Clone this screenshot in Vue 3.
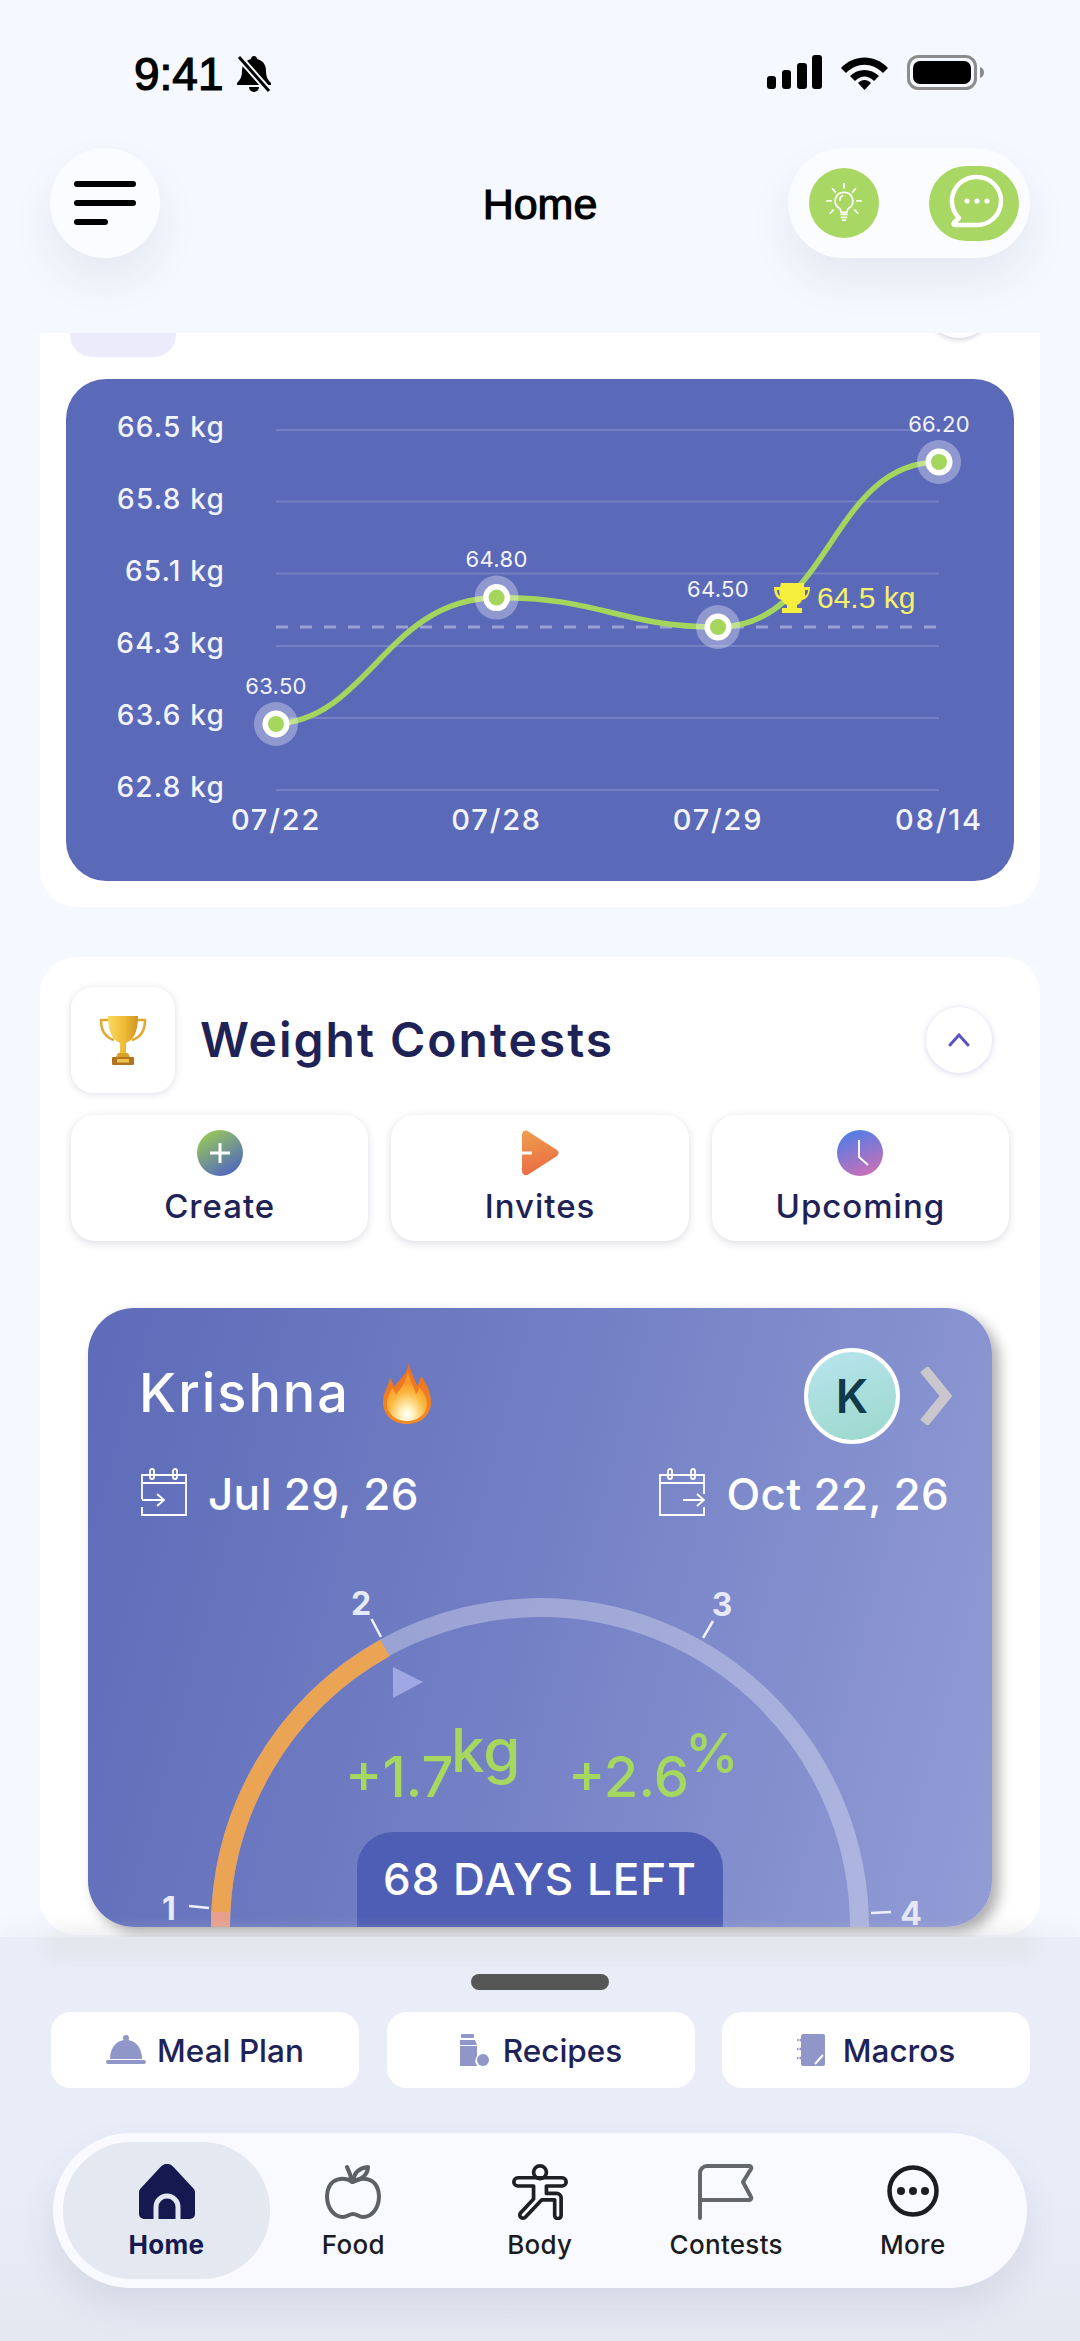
<script setup>
const gridY = [430, 501.5, 573.5, 646, 718, 790]
const yLabels = [
  { t: '66.5 kg', y: 437 }, { t: '65.8 kg', y: 509 }, { t: '65.1 kg', y: 581 },
  { t: '64.3 kg', y: 653 }, { t: '63.6 kg', y: 725 }, { t: '62.8 kg', y: 797 }
]
const points = [
  { x: 276, y: 724, v: '63.50', ly: 694, d: '07/22' },
  { x: 496.6, y: 597.6, v: '64.80', ly: 567, d: '07/28' },
  { x: 718, y: 627, v: '64.50', ly: 597, d: '07/29' },
  { x: 939, y: 462, v: '66.20', ly: 432, d: '08/14' }
]
const actions = ['Create', 'Invites', 'Upcoming']
</script>

<template>
  <div class="page">
    <header class="head">
      <div class="status">
        <div class="status-left">
          <span class="time">9:41</span>
          <svg class="bell" width="36" height="38" viewBox="0 0 36 38">
            <path d="M18 1c2 0 3 1.500 3 3 6 1.500 9 6 9 12 0 6 2 9 5 12v2H1v-2c3-3 5-6 5-12 0-6 3-10.500 9-12 0-1.500 1-3 3-3z" fill="#000"/>
            <path d="M13 32h10a5 5 0 0 1-10 0z" fill="#000"/>
            <path d="M3 2 L33 36" stroke="#f5f8fe" stroke-width="7"/>
            <path d="M3 2 L33 36" stroke="#000" stroke-width="3"/>
          </svg>
        </div>
        <div class="status-right">
          <svg width="55" height="35" viewBox="0 0 55 35">
            <rect x="0" y="21" width="9" height="13" rx="3" fill="#000"/>
            <rect x="15" y="15" width="9" height="19" rx="3" fill="#000"/>
            <rect x="30" y="8" width="10" height="26" rx="3" fill="#000"/>
            <rect x="45" y="0" width="10" height="34" rx="3" fill="#000"/>
          </svg>
          <svg width="47" height="35" viewBox="0 0 47 35">
            <path d="M0 13 C13 -1 34 -1 47 13 L42 18 C31 7 16 7 5 18 Z" fill="#000"/>
            <path d="M9 21 C17 13 30 13 38 21 L33 26 C27 20 20 20 14 26 Z" fill="#000"/>
            <path d="M17 28 C21 24 26 24 30 28 L23.500 35 Z" fill="#000"/>
          </svg>
          <svg width="78" height="35" viewBox="0 0 78 35">
            <rect x="1.500" y="1.500" width="67" height="32" rx="10" fill="none" stroke="#8c8c8c" stroke-width="3"/>
            <rect x="6" y="6" width="58" height="23" rx="7" fill="#000"/>
            <path d="M73 12c3 1 4 3 4 5.500s-1 4.500-4 5.500z" fill="#8c8c8c"/>
          </svg>
        </div>
      </div>
      <div class="topbar">
        <button class="menu-btn">
          <span class="bar"></span>
          <span class="bar"></span>
          <span class="bar short"></span>
        </button>
        <h1 class="title">Home</h1>
        <div class="actions-pill">
          <span class="bulb">
            <svg width="36" height="40" viewBox="0 0 50 56" fill="none" stroke="#fff" stroke-width="2.400" stroke-linecap="round">
              <path d="M25 13a12 12 0 0 0-7 22c2 1.500 3 3.500 3 6h8c0-2.500 1-4.500 3-6a12 12 0 0 0-7-22z"/>
              <path d="M21 44h8M21.500 48h7M23 52h4"/>
              <path d="M25 1v6M9 8l4 5M41 8l-4 5M1 25h6M43 25h6M6 42l4-4M44 42l-4-4"/>
              <path d="M19 24c0-3 2-5 4-6"/>
            </svg>
          </span>
          <span class="chat">
            <svg width="60" height="58" viewBox="0 0 60 58" fill="none" stroke="#fff" stroke-width="4.500" stroke-linejoin="round">
              <path d="M33 3a24 24 0 1 1 0 48H11c-1.500 0-2-1.500-1-2.500l5-4.500a24 24 0 0 1 18-41z"/>
              <circle cx="23" cy="27" r="2.600" fill="#fff" stroke="none"/>
              <circle cx="33" cy="27" r="2.600" fill="#fff" stroke="none"/>
              <circle cx="43" cy="27" r="2.600" fill="#fff" stroke="none"/>
            </svg>
          </span>
        </div>
      </div>
    </header>

    <main class="scroller">
      <section class="card weight-card">
        <div class="weight-head">
          <span class="weight-tile"></span>
          <span class="weight-toggle"></span>
        </div>
        <div class="chart-panel">
          <svg class="chart" width="948" height="502" viewBox="66 379 948 502">
            <line v-for="y in gridY" :key="y" x1="276" x2="939" :y1="y" :y2="y" class="grid"/>
            <line x1="276" x2="939" y1="627" y2="627" class="goal"/>
            <text v-for="l in yLabels" :key="l.t" x="225" :y="l.y" text-anchor="end" class="ylab">{{ l.t }}</text>
            <path d="M276 724 C370 718 385 600 496.600 597.600 C600 597 620 627 718 627 C830 627 830 462 939 462" class="curve"/>
            <g v-for="p in points" :key="p.d">
              <circle :cx="p.x" :cy="p.y" r="22" class="halo"/>
              <circle :cx="p.x" :cy="p.y" r="13.500" fill="#fff"/>
              <circle :cx="p.x" :cy="p.y" r="8" fill="#a4d65e"/>
              <text :x="p.x" :y="p.ly" text-anchor="middle" class="val">{{ p.v }}</text>
              <text :x="p.x" y="830" text-anchor="middle" class="xlab">{{ p.d }}</text>
            </g>
            <path d="M781 583h23v4h6c0 8-3 12-8 13-1 3-3 4-5 5v3h5v5h-20v-5h5v-3c-2-1-4-2-5-5-5-1-8-5-8-13h6zM779 590h-2c0 3 1 5 3 6zM805 590h3c0 3-1 5-3 6z" fill="#f6ee3c" fill-rule="evenodd"/>
            <text x="817" y="608" class="goal-text">64.5 kg</text>
          </svg>
        </div>
      </section>

      <section class="card contests-card">
        <div class="contests-head">
          <span class="trophy-tile">
            <svg width="48" height="51" viewBox="0 0 48 51">
              <defs>
                <linearGradient id="gold" x1="0" y1="0" x2="1" y2="0">
                  <stop offset="0" stop-color="#f9d95f"/>
                  <stop offset="0.55" stop-color="#eeba35"/>
                  <stop offset="1" stop-color="#cf9322"/>
                </linearGradient>
              </defs>
              <path d="M10 5H2c0 10 3 17 13 20M38 5h8c0 10-3 17-13 20" fill="none" stroke="#dfa92e" stroke-width="2.500"/>
              <path d="M9 1h30c0 15-4 24-12 27v11h-6V28C13 25 9 16 9 1z" fill="url(#gold)"/>
              <path d="M19 38h10l2 4H17z" fill="#dba02a"/>
              <rect x="13" y="42" width="22" height="8" rx="1" fill="#b0741f"/>
              <rect x="18" y="44" width="12" height="3.500" fill="#f1c34d"/>
            </svg>
          </span>
          <h2 class="contests-title">Weight Contests</h2>
          <span class="toggle">
            <svg width="22" height="14" viewBox="0 0 22 14" fill="none" stroke="#5a55c2" stroke-width="3" stroke-linecap="round">
              <path d="M2 12 L11 2 L20 12"/>
            </svg>
          </span>
        </div>

        <div class="action-row">
          <button v-for="(a, i) in actions" :key="a" class="action">
            <svg v-if="i === 0" width="46" height="46" viewBox="0 0 46 46">
              <defs>
                <linearGradient id="ga" x1="0.200" y1="0" x2="0.800" y2="1">
                  <stop offset="0" stop-color="#9acb57"/>
                  <stop offset="1" stop-color="#4d63c4"/>
                </linearGradient>
              </defs>
              <circle cx="23" cy="23" r="23" fill="url(#ga)"/>
              <path d="M23 13v20M13 23h20" stroke="#fff" stroke-width="3"/>
            </svg>
            <svg v-else-if="i === 1" width="40" height="46" viewBox="0 0 40 46">
              <defs>
                <linearGradient id="gb" x1="0.300" y1="0" x2="0.500" y2="1">
                  <stop offset="0" stop-color="#ee9d4c"/>
                  <stop offset="1" stop-color="#ea6a45"/>
                </linearGradient>
              </defs>
              <path d="M2 5c0-4 4-6 7-3l28 18c2 1.500 2 4.500 0 6L9 44c-3 2.500-7 1-7-3z" fill="url(#gb)"/>
              <path d="M2 23h10" stroke="#fff" stroke-width="3"/>
            </svg>
            <svg v-else width="46" height="46" viewBox="0 0 46 46">
              <defs>
                <linearGradient id="gc" x1="0.300" y1="0" x2="0.700" y2="1">
                  <stop offset="0" stop-color="#4f7ee6"/>
                  <stop offset="1" stop-color="#cc6fb6"/>
                </linearGradient>
              </defs>
              <circle cx="23" cy="23" r="23" fill="url(#gc)"/>
              <path d="M22 10v17l9 8" fill="none" stroke="#fff" stroke-width="1.800"/>
            </svg>
            <span class="action-label">{{ a }}</span>
          </button>
        </div>

        <article class="contest">
          <div class="contest-top">
            <div class="contest-name">
              <span class="name">Krishna</span>
              <svg class="flame" width="50" height="62" viewBox="0 0 50 62">
                <defs>
                  <linearGradient id="fl" x1="0" y1="0" x2="0" y2="1">
                    <stop offset="0" stop-color="#ee6f1c"/>
                    <stop offset="1" stop-color="#f08a26"/>
                  </linearGradient>
                  <radialGradient id="fc" cx="0.500" cy="0.880" r="0.650">
                    <stop offset="0" stop-color="#fff"/>
                    <stop offset="0.250" stop-color="#fff1bd"/>
                    <stop offset="0.700" stop-color="#fbb83f"/>
                    <stop offset="1" stop-color="#f79a2c"/>
                  </radialGradient>
                </defs>
                <path d="M27 0c1 10 5 15 8 24 2-3 3-6 4-10 6 8 10 17 10 26 0 13-10 22-24 22S1 53 1 40c0-10 5-14 7-24 2 3 3 5 4 9 6-8 14-14 15-25z" fill="url(#fl)"/>
                <path d="M26 9c1 9 5 13 8 23 2-2 3-4 3-7 5 6 8 11 8 17 0 10-9 17-20 17S5 52 5 42c0-7 3-11 5-16 2 2 3 4 4 7 5-7 11-14 12-24z" fill="url(#fc)"/>
              </svg>
            </div>
            <div class="contest-user">
              <span class="avatar">K</span>
              <svg width="32" height="58" viewBox="0 0 32 58" fill="none" stroke="#c9c6cd" stroke-width="10">
                <path d="M4 2 L26 29 L4 56"/>
              </svg>
            </div>
          </div>
          <div class="contest-dates">
            <div class="date">
              <svg width="46" height="49" viewBox="0 0 46 49" fill="none" stroke="#fff" stroke-width="1.800">
                <path d="M1 32V8h44v40H1v-8"/>
                <path d="M1 16h44"/>
                <rect x="9" y="2" width="4" height="10" rx="2"/>
                <rect x="32" y="2" width="4" height="10" rx="2"/>
                <path d="M1 33h21M16 27l7 6-7 6"/>
              </svg>
              <span>Jul 29, 26</span>
            </div>
            <div class="date">
              <svg width="46" height="49" viewBox="0 0 46 49" fill="none" stroke="#fff" stroke-width="1.800">
                <path d="M45 27V8H1v40h44v-8"/>
                <path d="M1 16h44"/>
                <rect x="9" y="2" width="4" height="10" rx="2"/>
                <rect x="32" y="2" width="4" height="10" rx="2"/>
                <path d="M24 33h21M38 27l7 6-7 6"/>
              </svg>
              <span>Oct 22, 26</span>
            </div>
          </div>
          <svg class="gauge" width="904" height="412" viewBox="88 1515 904 412">
            <path d="M220.500 1927 A319.500 319.500 0 0 1 859.500 1927" class="track"/>
            <path d="M220.500 1927 A319.500 319.500 0 0 1 385 1648" class="progress"/>
            <path d="M220.500 1927 L220.500 1912" class="progress-start"/>
            <path d="M189 1906 L209 1908M371.500 1619 L381 1637M713 1621 L703 1638M871 1913 L891 1912" class="tick"/>
            <text x="169" y="1920" text-anchor="middle" class="tick-num">1</text>
            <text x="361" y="1615" text-anchor="middle" class="tick-num">2</text>
            <text x="722" y="1616" text-anchor="middle" class="tick-num">3</text>
            <text x="911" y="1925" text-anchor="middle" class="tick-num">4</text>
            <path d="M393 1667 L423 1682 L393 1698 Z" fill="#a0a8e3"/>
            <text x="345" y="1797" class="stat">+1.7</text>
            <text x="451" y="1772" class="stat-unit">kg</text>
            <text x="568" y="1797" class="stat">+2.6</text>
            <text x="685" y="1772" class="stat-pct">%</text>
            <path d="M357 1927 V1868 a36 36 0 0 1 36 -36 H687 a36 36 0 0 1 36 36 V1927 Z" fill="#4f5eb5"/>
            <text x="540" y="1895" text-anchor="middle" class="left">68 DAYS LEFT</text>
          </svg>
        </article>
      </section>
    </main>

    <footer class="sheet">
      <div class="handle"></div>
      <div class="links">
        <button class="link">
          <svg width="40" height="30" viewBox="0 0 40 30" fill="#9196c9">
            <circle cx="20" cy="3" r="3"/>
            <path d="M4 24C4 12 11 5 20 5s16 7 16 19z"/>
            <rect x="0" y="25" width="40" height="4" rx="2"/>
          </svg>
          <span>Meal Plan</span>
        </button>
        <button class="link">
          <svg width="30" height="32" viewBox="0 0 30 32" fill="#9196c9">
            <rect x="2" y="0" width="13" height="4" rx="1"/>
            <path d="M1 6h15l2 5H1z"/>
            <path d="M1 12h17v10a8 8 0 0 0 0 9.500V32H1z"/>
            <circle cx="24" cy="26" r="6"/>
          </svg>
          <span>Recipes</span>
        </button>
        <button class="link">
          <svg width="28" height="32" viewBox="0 0 28 32" fill="none">
            <rect x="4" y="0" width="24" height="32" rx="2" fill="#9196c9"/>
            <path d="M1 6h7M1 15h7M1 24h7" stroke="#9196c9" stroke-width="2.500" stroke-linecap="round"/>
            <path d="M2 3v5M2 12v5M2 21v5" stroke="#fff" stroke-width="1"/>
            <path d="M18 30 L26 21" stroke="#fff" stroke-width="2"/>
          </svg>
          <span>Macros</span>
        </button>
      </div>
      <nav class="nav">
        <a class="nav-item active">
          <svg width="56" height="56" viewBox="0 0 56 56">
            <path d="M22 2.500a8 8 0 0 1 12 0L54 24a6 6 0 0 1 2 5v21a5 5 0 0 1-5 5H5a5 5 0 0 1-5-5V29a6 6 0 0 1 2-5z" fill="#15194f"/>
            <path d="M17 55V43a11 11 0 0 1 22 0v12" fill="none" stroke="#e3e7f0" stroke-width="5"/>
          </svg>
          <span>Home</span>
        </a>
        <a class="nav-item">
          <svg width="56" height="56" viewBox="0 0 56 56" fill="none" stroke="#5e6164" stroke-width="4" stroke-linecap="round" stroke-linejoin="round">
            <path d="M28 18C20 13 3 12 2 32c0 12 7 21 16 21 4 0 6-3 10-3s6 3 10 3c9 0 16-9 16-21-1-20-18-19-26-14z"/>
            <path d="M27 18c-1-7-3-11-5-15"/>
            <path d="M28 17c1-8 6-13 15-14 0 7-6 13-15 14z"/>
          </svg>
          <span>Food</span>
        </a>
        <a class="nav-item">
          <svg width="60" height="61" viewBox="0 0 60 61" fill="none" stroke="#1d1f22" stroke-width="4" stroke-linejoin="round">
            <circle cx="30" cy="9" r="7"/>
            <path d="M6 15h48a4.500 4.500 0 0 1 0 9H37v8h11a5 5 0 0 1 5 5v19a3.500 3.500 0 0 1-7 0V39H32L14 58a3.500 3.500 0 0 1-5-5l14-15V24H6a4.500 4.500 0 0 1 0-9z"/>
          </svg>
          <span>Body</span>
        </a>
        <a class="nav-item">
          <svg width="56" height="56" viewBox="0 0 56 56" fill="none" stroke="#63666b" stroke-width="4" stroke-linecap="round" stroke-linejoin="round">
            <path d="M2 54V9a7 7 0 0 1 7-7h42a2 2 0 0 1 2 3l-8 13 8 15a2 2 0 0 1-2 3H2"/>
          </svg>
          <span>Contests</span>
        </a>
        <a class="nav-item">
          <svg width="56" height="56" viewBox="0 0 56 56" fill="none">
            <circle cx="28" cy="27" r="23.500" stroke="#1b1d20" stroke-width="4.500"/>
            <circle cx="16" cy="27" r="4" fill="#1b1d20"/>
            <circle cx="28" cy="27" r="4" fill="#1b1d20"/>
            <circle cx="40" cy="27" r="4" fill="#1b1d20"/>
          </svg>
          <span>More</span>
        </a>
      </nav>
    </footer>
  </div>
</template>

<style scoped>
.page {
  width: 1080px;
  height: 2341px;
  display: flex;
  flex-direction: column;
  overflow: hidden;
  background: #f5f8fe;
  font-family: Inter, "Noto Sans", sans-serif;
  color: #1e2257;
}
button {
  border: 0;
  padding: 0;
  font: inherit;
  color: inherit;
}
.head {
  height: 333px;
  flex: none;
  font-family: "Liberation Sans", Arial, sans-serif;
  color: #000;
}
.status {
  height: 148px;
  box-sizing: border-box;
  padding: 55px 95px 0 134px;
  display: flex;
  justify-content: space-between;
  align-items: flex-start;
}
.status-left {
  display: flex;
  align-items: center;
  gap: 12px;
}
.time {
  font-size: 46px;
  font-weight: 400;
  line-height: 37px;
  -webkit-text-stroke: 1.2px #000;
}
.status-right {
  display: flex;
  gap: 19px;
}
.topbar {
  height: 110px;
  padding: 0 50px;
  display: grid;
  grid-template-columns: 1fr auto 1fr;
  align-items: center;
}
.menu-btn {
  width: 110px;
  height: 110px;
  border-radius: 50%;
  background: #fbfcff;
  box-shadow: 0 22px 44px rgba(40, 50, 90, 0.08);
  display: flex;
  flex-direction: column;
  justify-content: center;
  gap: 13px;
  padding-left: 24px;
  box-sizing: border-box;
}
.bar {
  display: block;
  width: 62px;
  height: 6px;
  border-radius: 3px;
  background: #000;
}
.bar.short {
  width: 34px;
}
.title {
  margin: 2px 0 0;
  font-size: 43px;
  font-weight: 400;
  line-height: 48px;
  -webkit-text-stroke: 1.1px #000;
}
.actions-pill {
  justify-self: end;
  width: 242px;
  height: 110px;
  box-sizing: border-box;
  border-radius: 55px;
  background: #fbfcff;
  box-shadow: 0 22px 44px rgba(40, 50, 90, 0.08);
  padding: 0 11px 0 21px;
  display: flex;
  align-items: center;
  justify-content: space-between;
}
.bulb {
  width: 70px;
  height: 70px;
  border-radius: 50%;
  background: #a8d763;
  display: flex;
  align-items: center;
  justify-content: center;
}
.chat {
  width: 90px;
  height: 75px;
  border-radius: 38px;
  background: #a8d763;
  display: flex;
  align-items: center;
  justify-content: center;
}
.scroller {
  height: 1604px;
  flex: none;
  overflow: hidden;
  padding: 0 40px;
}
.card {
  background: #fff;
  border-radius: 36px;
}
.weight-card {
  margin-top: -60px;
  padding: 0 26px 26px;
}
.weight-head {
  height: 84px;
  display: flex;
  justify-content: space-between;
  align-items: flex-end;
  margin-bottom: 22px;
  padding: 0 22px 0 4px;
}
.weight-tile {
  width: 106px;
  height: 84px;
  background: #ecebfb;
  border-radius: 0 0 22px 22px;
}
.weight-toggle {
  width: 66px;
  height: 66px;
  margin-bottom: 19px;
  border-radius: 50%;
  background: #fff;
  box-shadow: 0 2px 5px rgba(60, 60, 120, 0.22);
}
.chart-panel {
  height: 502px;
  border-radius: 40px;
  background: #5b69b9;
}
.chart {
  display: block;
}
.grid {
  stroke: rgba(255, 255, 255, 0.16);
  stroke-width: 2;
}
.goal {
  stroke: rgba(255, 255, 255, 0.38);
  stroke-width: 3;
  stroke-dasharray: 12 12;
}
.ylab {
  fill: #f3f4fb;
  font-size: 28px;
  font-weight: 500;
  letter-spacing: 1.2px;
}
.xlab {
  fill: #f3f4fb;
  font-size: 29px;
  font-weight: 500;
  letter-spacing: 1.8px;
}
.val {
  fill: #f3f4fb;
  font-size: 22px;
  letter-spacing: 0.3px;
}
.curve {
  fill: none;
  stroke: #a4d65e;
  stroke-width: 5.500;
}
.halo {
  fill: rgba(255, 255, 255, 0.32);
}
.goal-text {
  fill: #f6f06a;
  font-family: "Liberation Sans", Arial, sans-serif;
  font-size: 30px;
}
.contests-card {
  margin-top: 50px;
  height: 978px;
  box-sizing: border-box;
  padding: 30px 31px 0;
}
.contests-head {
  height: 106px;
  display: flex;
  align-items: center;
}
.trophy-tile {
  width: 104px;
  height: 106px;
  border-radius: 22px;
  background: #fff;
  box-shadow: 0 1px 7px rgba(40, 40, 90, 0.16);
  display: flex;
  align-items: center;
  justify-content: center;
}
.contests-title {
  margin: 0 0 0 25px;
  font-size: 48px;
  font-weight: 600;
  line-height: 54px;
  letter-spacing: 2px;
  flex: 1;
}
.toggle {
  width: 66px;
  height: 66px;
  margin: 0 17px 0 0;
  border-radius: 50%;
  background: #fff;
  box-shadow: 0 1px 6px rgba(80, 70, 170, 0.24);
  display: flex;
  align-items: center;
  justify-content: center;
}
.action-row {
  margin-top: 22px;
  display: grid;
  grid-template-columns: repeat(3, 1fr);
  gap: 23px;
}
.action {
  height: 126px;
  border-radius: 24px;
  background: #fff;
  box-shadow: 0 2px 8px rgba(40, 40, 90, 0.16);
  display: flex;
  flex-direction: column;
  align-items: center;
  padding-top: 15px;
  box-sizing: border-box;
}
.action-label {
  margin-top: 9px;
  font-size: 33px;
  font-weight: 500;
  line-height: 42px;
  letter-spacing: 1px;
}
.contest {
  margin: 67px 17px 0;
  height: 619px;
  box-sizing: border-box;
  padding-top: 39px;
  border-radius: 46px;
  background: linear-gradient(105deg, #5d6bb9 0%, #7481c5 50%, #929cd6 100%);
  box-shadow: 7px 7px 14px rgba(0, 0, 0, 0.32);
  color: #fff;
}
.contest-top {
  height: 97px;
  padding: 0 40px 0 51px;
  display: flex;
  justify-content: space-between;
  align-items: center;
}
.contest-name {
  display: flex;
  align-items: center;
  gap: 32px;
  margin-top: -5px;
}
.name {
  font-size: 54px;
  font-weight: 500;
  line-height: 60px;
  letter-spacing: 2px;
}
.contest-user {
  display: flex;
  align-items: center;
  gap: 20px;
}
.avatar {
  width: 96px;
  height: 96px;
  box-sizing: border-box;
  border-radius: 50%;
  border: 4px solid #fff;
  background: linear-gradient(160deg, #b8e4ee, #9bd8cb);
  color: #0e3a4a;
  font-size: 46px;
  font-weight: 600;
  display: flex;
  align-items: center;
  justify-content: center;
}
.contest-dates {
  height: 48px;
  margin-top: 23px;
  padding: 0 43px 0 53px;
  display: flex;
  justify-content: space-between;
}
.date {
  display: flex;
  align-items: center;
  gap: 21px;
  font-size: 44px;
  font-weight: 500;
  line-height: 48px;
  letter-spacing: 0.3px;
}
.date span {
  padding-top: 5px;
}
.gauge {
  display: block;
  overflow: visible;
}
.track {
  fill: none;
  stroke: rgba(255, 255, 255, 0.3);
  stroke-width: 19;
}
.progress {
  fill: none;
  stroke: #eaa453;
  stroke-width: 19;
}
.progress-start {
  fill: none;
  stroke: #e9a08b;
  stroke-width: 19;
}
.tick {
  fill: none;
  stroke: #eef0fa;
  stroke-width: 2.500;
}
.tick-num {
  fill: #e6e9f8;
  font-size: 32px;
  font-weight: 700;
}
.stat {
  fill: #a6d860;
  font-size: 56px;
  font-weight: 500;
}
.stat-unit {
  fill: #a6d860;
  font-size: 60px;
  font-weight: 500;
}
.stat-pct {
  fill: #a6d860;
  font-size: 54px;
  font-weight: 500;
}
.left {
  fill: #fff;
  font-size: 44px;
  font-weight: 500;
  letter-spacing: 1px;
}
.sheet {
  position: relative;
  z-index: 2;
  flex: 1;
  box-sizing: border-box;
  padding-top: 37px;
  background: linear-gradient(#e9edf8 0%, #e9edf8 60%, #e4e8f1 100%);
  box-shadow: 0 -8px 22px rgba(60, 60, 90, 0.04);
}
.sheet::before {
  content: "";
  position: absolute;
  top: -2px;
  left: 46px;
  right: 46px;
  height: 22px;
  background: #dcdcdf;
  opacity: 0.55;
  filter: blur(10px);
}
.handle {
  position: relative;
  width: 138px;
  height: 16px;
  margin: 0 auto;
  border-radius: 8px;
  background: #555756;
}
.links {
  position: relative;
  margin-top: 22px;
  padding: 0 50px 0 51px;
  display: grid;
  grid-template-columns: repeat(3, 308px);
  justify-content: space-between;
}
.link {
  height: 76px;
  border-radius: 20px;
  background: #fff;
  display: flex;
  align-items: center;
  justify-content: center;
  gap: 14px;
  font-size: 31.500px;
  font-weight: 500;
}
.link:first-child {
  gap: 11px;
}
.link:last-child {
  gap: 18px;
}
.nav {
  margin: 45px 53px 0;
  height: 155px;
  box-sizing: border-box;
  border-radius: 78px;
  background: #f8faff;
  box-shadow: 0 18px 36px rgba(60, 70, 110, 0.1);
  padding: 9px 10px;
  display: flex;
  align-items: stretch;
}
.nav-item {
  width: 186.500px;
  display: flex;
  flex-direction: column;
  align-items: center;
  padding-top: 22px;
  box-sizing: border-box;
  font-size: 26px;
  font-weight: 500;
  letter-spacing: 0.3px;
  color: #1a1c20;
  border-radius: 68px;
}
.nav-item svg {
  height: 56px;
}
.nav-item span {
  margin-top: 9px;
  line-height: 32px;
}
.nav-item.active {
  width: 207px;
  margin-right: -10px;
  background: #e4e8f1;
  color: #15194f;
  font-weight: 700;
}
</style>
